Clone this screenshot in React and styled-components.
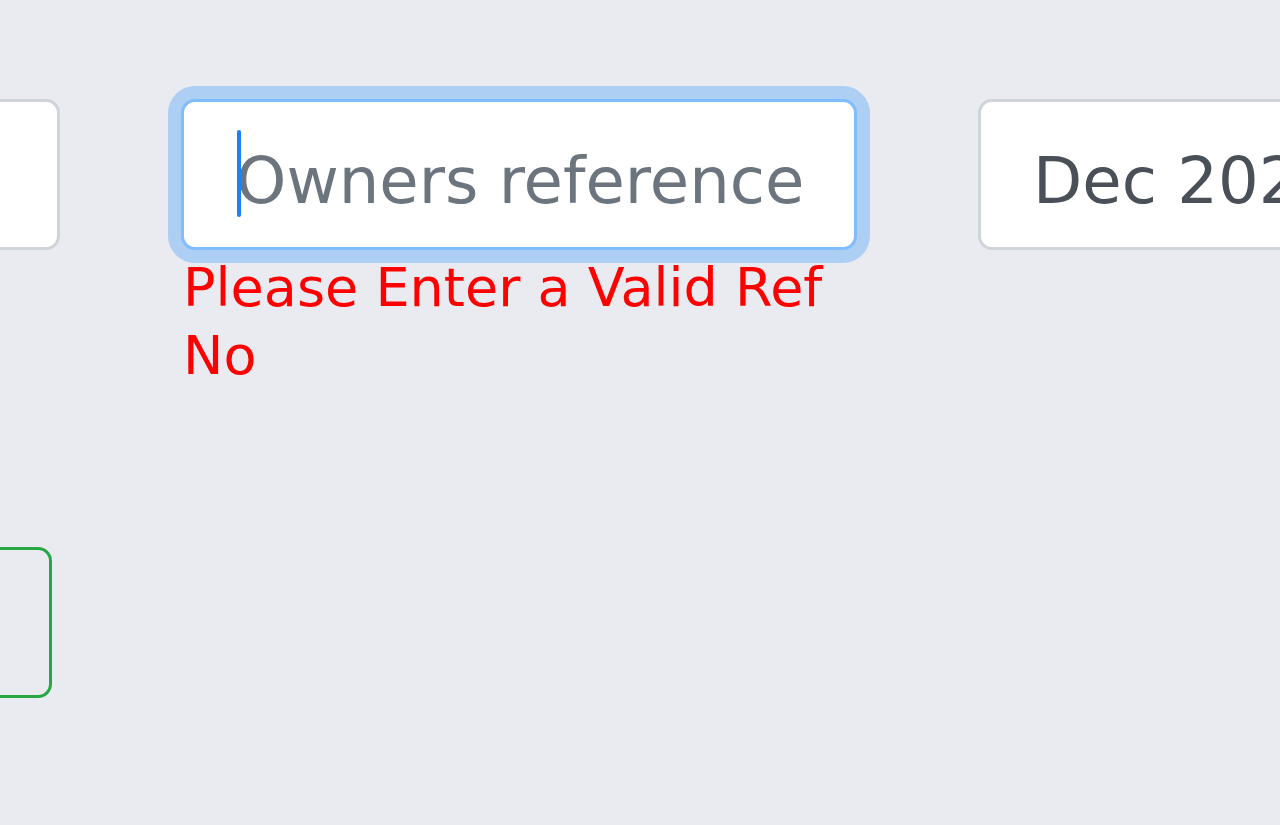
import React from 'react';
import styled, { createGlobalStyle, css } from 'styled-components';

const GlobalStyle = createGlobalStyle`
  html, body {
    margin: 0;
    padding: 0;
    background: #e9ebf0;
    overflow: hidden;
  }
  body {
    font-family: "DejaVu Sans", Verdana, sans-serif;
  }
`;

const Page = styled.div`
  width: 1280px;
  height: 825px;
  padding-top: 99px;
  box-sizing: border-box;
  overflow: hidden;
`;

const FieldRow = styled.div`
  display: grid;
  grid-template-columns: repeat(3, 676px);
  column-gap: 121px;
  margin-left: -616px;
  align-items: start;
`;

const Field = styled.div`
  display: flex;
  flex-direction: column;
`;

const InputWrap = styled.div`
  position: relative;
`;

const focusRing = css`
  border-color: #80bdff;
  box-shadow: 0 0 0 13px rgba(0, 123, 255, 0.25);
`;

const Input = styled.input`
  display: block;
  width: 100%;
  height: 151px;
  box-sizing: border-box;
  padding: 12px 51px 0 52px;
  border: 3px solid #ced4da;
  border-radius: 14px;
  background: #fff;
  color: #495057;
  font-family: "DejaVu Sans", Verdana, sans-serif;
  font-size: 64px;
  outline: none;
  caret-color: transparent;
  ${({ $focused }) => $focused && focusRing}

  &::placeholder {
    color: #6c757d;
    opacity: 1;
  }
`;

/* the text caret drawn over the focused field */
const Caret = styled.span`
  position: absolute;
  left: 56px;
  top: 31px;
  width: 4px;
  height: 87px;
  border-radius: 2px;
  background: #1a82f7;
`;

const ErrorText = styled.div`
  margin-top: 4px;
  padding-left: 2px;
  color: #ff0000;
  font-size: 54px;
  line-height: 68px;
`;

const ActionRow = styled.div`
  display: flex;
  margin-top: 157px;
  margin-left: -348px;
`;

const OutlineButton = styled.button`
  width: 400px;
  height: 151px;
  box-sizing: border-box;
  border: 3px solid #28a745;
  border-radius: 14px;
  background: transparent;
  color: #28a745;
  font-family: "DejaVu Sans", Verdana, sans-serif;
  font-size: 64px;
`;

const App = () => {
  return (
    <Page>
      <GlobalStyle />
      <FieldRow>
        <Field>
          <Input readOnly />
        </Field>
        <Field>
          <InputWrap>
            <Input $focused placeholder="Owners reference" readOnly />
            <Caret />
          </InputWrap>
          <ErrorText>Please Enter a Valid Ref No</ErrorText>
        </Field>
        <Field>
          <Input value="Dec 2023" readOnly />
        </Field>
      </FieldRow>
      <ActionRow>
        <OutlineButton aria-label="Save" />
      </ActionRow>
    </Page>
  );
};

export default App;
